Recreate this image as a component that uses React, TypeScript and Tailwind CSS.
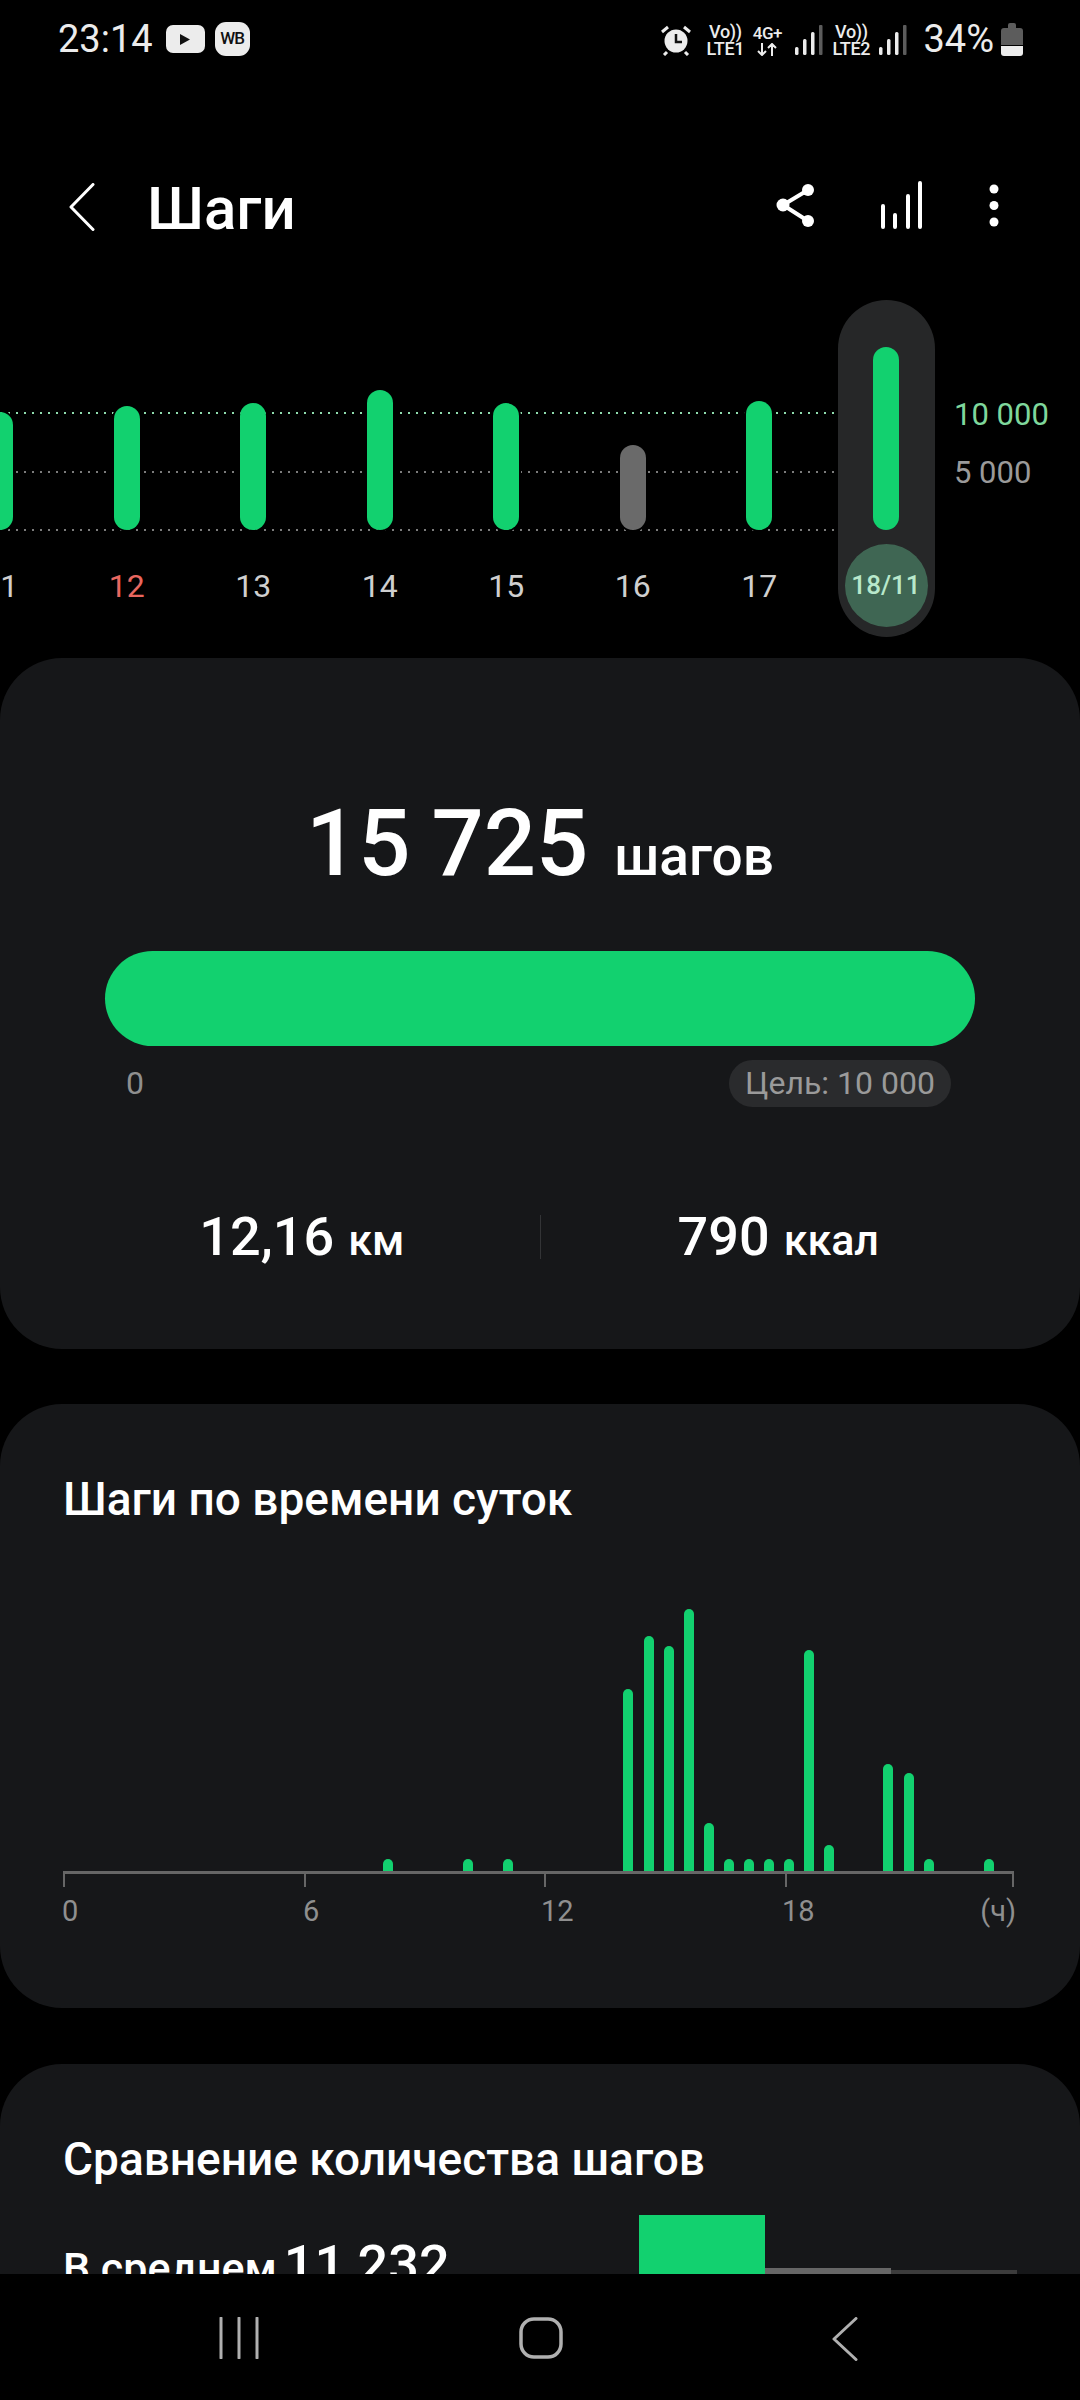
const hourBars = [
  { x: 388, h: 13 },
  { x: 468, h: 13 },
  { x: 508, h: 13 },
  { x: 628, h: 183 },
  { x: 649, h: 236 },
  { x: 669, h: 226 },
  { x: 689, h: 263 },
  { x: 709, h: 49 },
  { x: 729, h: 13 },
  { x: 749, h: 13 },
  { x: 769, h: 13 },
  { x: 789, h: 13 },
  { x: 809, h: 222 },
  { x: 829, h: 27 },
  { x: 888, h: 108 },
  { x: 909, h: 99 },
  { x: 929, h: 13 },
  { x: 989, h: 13 },
];

const days = [
  { label: '11', h: 118, color: 'bg-[#12d16f]', text: 'text-[#cfcfcf]' },
  { label: '12', h: 124, color: 'bg-[#12d16f]', text: 'text-[#e8675f]' },
  { label: '13', h: 127, color: 'bg-[#12d16f]', text: 'text-[#cfcfcf]' },
  { label: '14', h: 140, color: 'bg-[#12d16f]', text: 'text-[#cfcfcf]' },
  { label: '15', h: 127, color: 'bg-[#12d16f]', text: 'text-[#cfcfcf]' },
  { label: '16', h: 85, color: 'bg-[#6a6a6a]', text: 'text-[#cfcfcf]' },
  { label: '17', h: 129, color: 'bg-[#12d16f]', text: 'text-[#cfcfcf]' },
];

function StatusBar() {
  return (
    <div className="flex h-[80px] items-start justify-between pl-[58px] pr-[57px] pt-[19px] text-[#ececec]">
      <div className="flex items-center">
        <span className="text-[38px] leading-[40px]">23:14</span>
        {/* YouTube */}
        <div className="ml-[13px] flex h-[28px] w-[39px] items-center justify-center rounded-[7px] bg-[#ececec]">
          <svg width="12" height="13" viewBox="0 0 12 13">
            <path d="M1 1l10 5.5L1 12z" fill="#111" />
          </svg>
        </div>
        {/* WB */}
        <div className="ml-[10px] flex h-[34px] w-[35px] items-center justify-center rounded-[11px] bg-[#ececec] text-[17px] font-medium tracking-[-1px] text-[#111]">
          WB
        </div>
      </div>
      <div className="flex items-start">
        <svg width="32" height="32" viewBox="0 0 32 32" className="mt-[5px]">
          <circle cx="16" cy="17" r="11.5" fill="#ececec" />
          <path d="M16 10v8h6" stroke="#111" strokeWidth="2.5" fill="none" />
          <path d="M2 8l6-5M30 8l-6-5M7 28l-3 3M25 28l3 3" stroke="#ececec" strokeWidth="3" />
        </svg>
        <NetworkBlock sim="LTE1" className="ml-[13px] w-[40px]" />
        <div className="ml-[6px] flex w-[32px] flex-col items-center pt-[6px] text-[17px] font-medium leading-[16px] tracking-[-0.5px]">
          <span>4G+</span>
          <svg width="22" height="13" viewBox="0 0 22 13" className="mt-[2px]">
            <path d="M6 0v12M2 8l4 4 4-4M16 13V1M12 5l4-4 4 4" stroke="#ececec" strokeWidth="2" fill="none" />
          </svg>
        </div>
        <SignalIcon className="ml-[12px] mt-[6px]" />
        <NetworkBlock sim="LTE2" className="ml-[7px] w-[42px]" />
        <SignalIcon className="ml-[7px] mt-[6px]" />
        <span className="ml-[16px] text-[38px] leading-[40px]">34%</span>
        <svg width="22" height="33" viewBox="0 0 22 33" className="ml-[7px] mt-[4px]">
          <path d="M7 2a2 2 0 012-2h4a2 2 0 012 2v3h4a3 3 0 013 3v14H0V8a3 3 0 013-3h4z" fill="#5c5c5c" />
          <path d="M0 23h22v7a3 3 0 01-3 3H3a3 3 0 01-3-3z" fill="#ececec" />
        </svg>
      </div>
    </div>
  );
}

function NetworkBlock({ sim, className }: { sim: string; className?: string }) {
  return (
    <div className={`flex flex-col items-center pt-[5px] text-[18px] font-medium leading-[15px] ${className}`}>
      <span className="tracking-[-0.3px]">Vo))</span>
      <span className="mt-[2px] tracking-[-0.3px]">{sim}</span>
    </div>
  );
}

function SignalIcon({ className }: { className?: string }) {
  return (
    <svg width="28" height="30" viewBox="0 0 28 30" className={className}>
      <rect x="0" y="22" width="3.5" height="8" rx="1.5" fill="#ececec" />
      <rect x="8" y="14" width="3.5" height="16" rx="1.5" fill="#ececec" />
      <rect x="16" y="7" width="3.5" height="23" rx="1.5" fill="#ececec" />
      <rect x="24" y="0" width="3.5" height="30" rx="1" fill="#5c5c5c" />
    </svg>
  );
}

function Header() {
  return (
    <div className="flex h-[90px] items-center pl-[69px] pr-[80px] text-white">
      <svg width="26" height="48" viewBox="0 0 26 48" className="mb-[7px]">
        <path d="M24 1.5L2 24l22 22.5" stroke="#fff" strokeWidth="3" fill="none" strokeLinecap="round" strokeLinejoin="round" />
      </svg>
      <h1 className="mb-[2px] ml-[52px] text-[60px] font-medium leading-none">Шаги</h1>
      <div className="mb-[10px] ml-auto flex items-center">
        <svg width="40" height="44" viewBox="0 0 40 44">
          <path d="M32 7L7 22l25 16" stroke="#fff" strokeWidth="4" fill="none" />
          <circle cx="32" cy="7" r="6" fill="#fff" />
          <circle cx="7" cy="22" r="6.5" fill="#fff" />
          <circle cx="32" cy="38" r="6" fill="#fff" />
        </svg>
        <svg width="42" height="48" viewBox="0 0 42 48" className="ml-[64px]">
          <path d="M3 46V25M15 46V34M28 46V15M40 46V2" stroke="#fff" strokeWidth="4" strokeLinecap="round" />
        </svg>
        <svg width="12" height="46" viewBox="0 0 12 46" className="ml-[66px]">
          <circle cx="6" cy="7" r="4.5" fill="#fff" />
          <circle cx="6" cy="23.5" r="4.5" fill="#fff" />
          <circle cx="6" cy="40" r="4.5" fill="#fff" />
        </svg>
      </div>
    </div>
  );
}

function DayBar({ h, color }: { h: number; color: string }) {
  return <div className={`w-[26px] rounded-full ${color}`} style={{ height: h }} />;
}

function WeekChart() {
  return (
    <div className="relative mt-[45px] h-[358px] overflow-hidden">
      {/* dotted goal lines */}
      <div className="absolute left-0 top-[112px] h-[2px] w-[837px] bg-[repeating-linear-gradient(90deg,#8fdcae_0,#8fdcae_2px,transparent_2px,transparent_8px)]" />
      <div className="absolute left-0 top-[171px] h-[2px] w-[837px] bg-[repeating-linear-gradient(90deg,#7c7c7c_0,#7c7c7c_2px,transparent_2px,transparent_8px)]" />
      <div className="absolute left-0 top-[229px] h-[2px] w-[837px] bg-[repeating-linear-gradient(90deg,#7c7c7c_0,#7c7c7c_2px,transparent_2px,transparent_8px)]" />

      <div className="relative ml-[-63px] flex items-start">
        {days.map((d) => (
          <div key={d.label} className="flex w-[126.5px] flex-col items-center">
            <div className="flex h-[230px] items-end">
              <div className="rounded-full ring-[2px] ring-black">
                <DayBar h={d.h} color={d.color} />
              </div>
            </div>
            <span className={`mt-[37px] text-[32px] leading-[38px] ${d.text}`}>{d.label}</span>
          </div>
        ))}
        <div className="ml-[15px] flex h-[337px] w-[97px] flex-col items-center rounded-full bg-[#262728]">
          <div className="flex h-[230px] items-end">
            <DayBar h={183} color="bg-[#12d16f]" />
          </div>
          <div className="mt-[14px] flex h-[83px] w-[83px] items-center justify-center rounded-full bg-[#3f6653] text-[26px] font-medium text-[#b8e8cb]">
            18/11
          </div>
        </div>
      </div>

      <span className="absolute left-[954px] top-[96px] text-[31px] leading-[38px] text-[#7fd79c]">10 000</span>
      <span className="absolute left-[954px] top-[154px] text-[31px] leading-[38px] text-[#9a9a9a]">5 000</span>
    </div>
  );
}

function SummaryCard() {
  return (
    <div className="h-[691px] rounded-[62px] bg-[#161719] pt-[136px]">
      <div className="flex items-baseline justify-center text-white">
        <span className="text-[92px] font-medium leading-[100px] [word-spacing:-2px]">15 725</span>
        <span className="ml-[26px] text-[55px] font-medium leading-none">шагов</span>
      </div>
      <div className="mx-[105px] mt-[57px] h-[95px] rounded-full bg-[#12d16f]" />
      <div className="ml-[126px] mr-[129px] mt-[13px] flex items-center justify-between">
        <span className="text-[32px] text-[#8f8f8f]">0</span>
        <div className="flex h-[47px] w-[222px] items-center justify-center rounded-full bg-[#2a2b2d] text-[32px] text-[#9a9a9a]">
          Цель: 10 000
        </div>
      </div>
      <div className="mx-[64px] mt-[105px] flex items-center">
        <div className="flex flex-1 items-baseline justify-center text-white">
          <span className="text-[54px] font-medium leading-[50px]">12,16</span>
          <span className="ml-[14px] text-[43px] font-medium leading-none">км</span>
        </div>
        <div className="h-[44px] w-px bg-[#333436]" />
        <div className="flex flex-1 items-baseline justify-center text-white">
          <span className="text-[54px] font-medium leading-[50px]">790</span>
          <span className="ml-[14px] text-[43px] font-medium leading-none">ккал</span>
        </div>
      </div>
    </div>
  );
}

function HourlyCard() {
  return (
    <div className="mt-[55px] h-[604px] rounded-[62px] bg-[#161719] pt-[67px]">
      <h2 className="pl-[63px] text-[46px] font-medium leading-[56px] text-white">Шаги по времени суток</h2>
      <div className="relative mt-[51px] h-[330px] w-full">
        {hourBars.map((b) => (
          <div
            key={b.x}
            className="absolute bottom-[36px] w-[10px] rounded-t-full bg-[#12d16f]"
            style={{ left: b.x - 5, height: b.h }}
          />
        ))}
        <div className="absolute bottom-[34px] left-[63px] h-[3px] w-[951px] bg-[#666666]" />
        {[63, 304, 544, 785, 1012].map((x) => (
          <div key={x} className="absolute bottom-[21px] h-[15px] w-[2px] bg-[#666666]" style={{ left: x }} />
        ))}
      </div>
      <div className="relative h-[40px] text-[29px] leading-[40px] text-[#8f8f8f]">
        <span className="absolute left-[62px] top-[-17px]">0</span>
        <span className="absolute left-[303px] top-[-17px]">6</span>
        <span className="absolute left-[541px] top-[-17px]">12</span>
        <span className="absolute left-[782px] top-[-17px]">18</span>
        <span className="absolute right-[64px] top-[-17px]">(ч)</span>
      </div>
    </div>
  );
}

function CompareCard() {
  return (
    <div className="mt-[56px] h-[400px] rounded-[62px] bg-[#161719] pt-[67px]">
      <h2 className="pl-[63px] text-[46px] font-medium leading-[56px] text-white">Сравнение количества шагов</h2>
      <div className="mt-[28px] flex items-start pl-[63px]">
        <div className="flex items-baseline pt-[20px] text-white">
          <span className="text-[43px] font-medium leading-[60px]">В среднем</span>
          <span className="ml-[7px] text-[54px] font-medium leading-[60px] [word-spacing:-1px]">11 232</span>
        </div>
        <div className="ml-auto mr-[63px] flex items-start">
          <div className="h-[120px] w-[126px] bg-[#12d16f]" />
          <div className="mt-[53px] h-[67px] w-[126px] bg-[#666666]" />
          <div className="mt-[55px] h-[65px] w-[126px] bg-[#3c3c3c]" />
        </div>
      </div>
    </div>
  );
}

function NavBar() {
  return (
    <div className="flex h-[126px] shrink-0 items-start bg-black pt-[43px]">
      <svg width="40" height="42" viewBox="0 0 40 42" className="ml-[219px]">
        <path d="M2 1v40M20 1v40M38 1v40" stroke="#b0b0b0" strokeWidth="3" strokeLinecap="round" />
      </svg>
      <svg width="44" height="42" viewBox="0 0 44 42" className="ml-[260px]">
        <rect x="2" y="2" width="40" height="38" rx="13" stroke="#b0b0b0" strokeWidth="3.5" fill="none" />
      </svg>
      <svg width="26" height="44" viewBox="0 0 26 44" className="ml-[269px]">
        <path d="M24 1.5L2 22l22 20.5" stroke="#b0b0b0" strokeWidth="3" fill="none" strokeLinecap="round" strokeLinejoin="round" />
      </svg>
    </div>
  );
}

export default function App() {
  return (
    <div className="flex h-[2400px] w-[1080px] flex-col overflow-hidden bg-black font-['Roboto',sans-serif]">
      <div className="min-h-0 flex-1 overflow-hidden">
        <StatusBar />
        <div className="mt-[85px]" />
        <Header />
        <WeekChart />
        <SummaryCard />
        <HourlyCard />
        <CompareCard />
      </div>
      <NavBar />
    </div>
  );
}
